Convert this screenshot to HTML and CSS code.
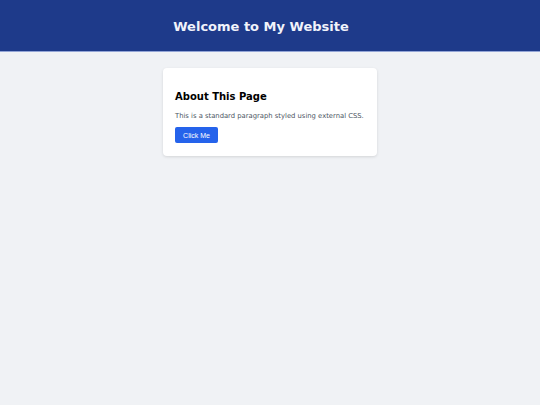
FILE: index.html
```html
<!DOCTYPE html>
<html>
<head>
<meta charset="utf-8">
<link rel="stylesheet" href="styles.css">
</head>
<body>
<header class="site-header"><h1 class="site-title">Welcome to My Website</h1></header>
<main class="content">
  <section class="card">
    <h2 class="card-title">About This Page</h2>
    <p class="card-text">This is a standard paragraph styled using external CSS.</p>
    <button class="btn">Click Me</button>
  </section>
</main>
</body>
</html>
```
FILE: styles.css
```css
html, body { margin: 0; padding: 0; }
body {
  background: #f0f2f5;
  font-family: "DejaVu Sans", sans-serif;
  width: 540px;
  height: 405px;
}
.site-header {
  background: #1e3a8a;
  height: 52px;
  display: flex;
  align-items: center;
  justify-content: center;
  padding: 1px 18px 0 0;
  border-bottom: 1px solid #93a5d6;
  box-sizing: border-box;
}
.site-title {
  margin: 0;
  color: #f1f3fb;
  font-size: 13px;
  font-weight: bold;
}
.content {
  display: flex;
  justify-content: center;
  padding-top: 16px;
}
.card {
  width: 214px;
  box-sizing: border-box;
  background: #fff;
  border-radius: 4px;
  box-shadow: 0 1px 3px rgba(0,0,0,0.12);
  padding: 23px 12px 13px;
}
.card-title {
  margin: 0 0 10px;
  font-size: 10px;
  font-weight: bold;
  color: #000;
}
.card-text {
  margin: 0 0 7px;
  font-size: 6.8px;
  color: #4b5563;
  white-space: nowrap;
}
.btn {
  display: block;
  background: #2563eb;
  color: #fff;
  border: none;
  border-radius: 2px;
  width: 43px;
  height: 16px;
  padding: 0;
  font-family: "Liberation Sans", Arial, sans-serif;
  font-size: 7px;
}
```
